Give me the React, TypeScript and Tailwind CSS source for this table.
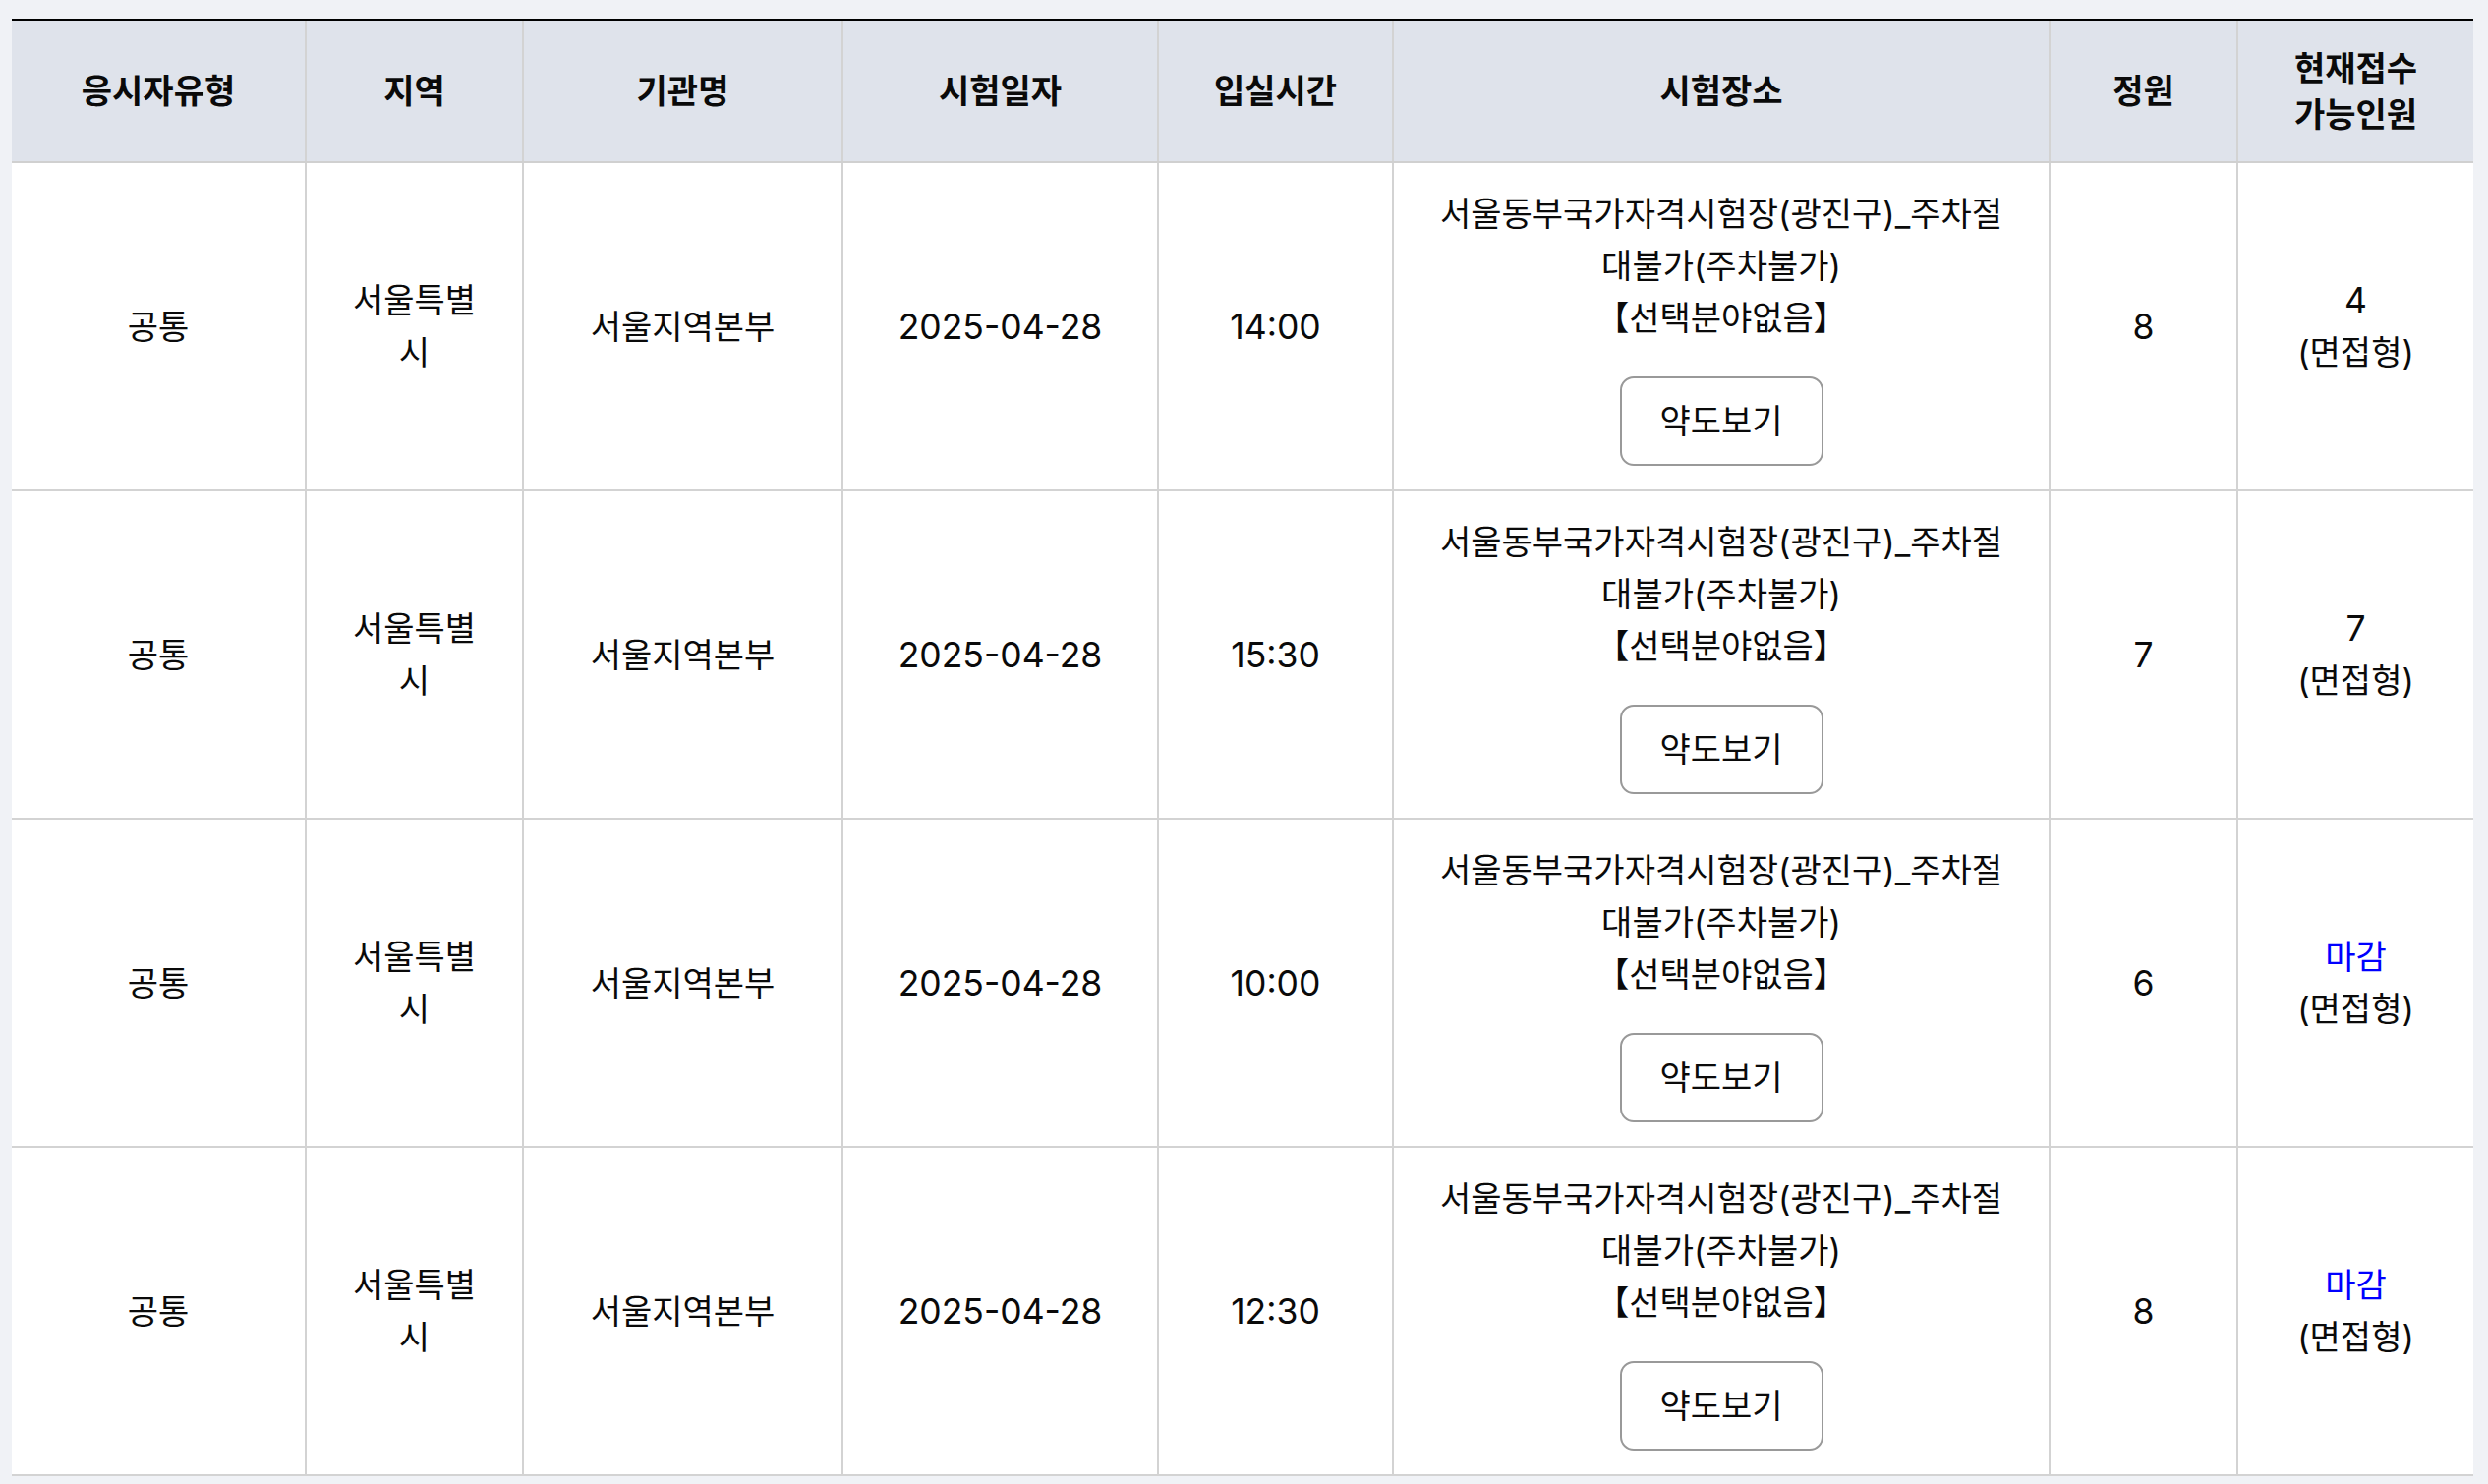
const COLS = "grid grid-cols-[298px_221px_325px_321px_239px_668px_191px_241px]";

const HEAD = ["응시자유형", "지역", "기관명", "시험일자", "입실시간", "시험장소", "정원"];

const ROWS = [
  { time: "14:00", cap: "8", left: "4" },
  { time: "15:30", cap: "7", left: "7" },
  { time: "10:00", cap: "6", left: "마감" },
  { time: "12:30", cap: "8", left: "마감" },
];

function Cell({ first, children }: { first?: boolean; children: React.ReactNode }) {
  return (
    <div
      className={`flex flex-col items-center justify-center text-center ${
        first ? "" : "border-l-2 border-[#d3d3d3]"
      }`}
    >
      {children}
    </div>
  );
}

export default function App() {
  return (
    <div className="min-h-screen bg-[#f0f2f6] pb-[6px] pl-[12px] pr-[15px] pt-[19px] font-['Inter','Noto_Sans_CJK_KR',sans-serif] text-[34px] text-[#0a0a0a]">
      <div className="w-[2504px] border-t-2 border-black">
        <div className={`${COLS} h-[145px] border-b-2 border-[#d0d0d0] bg-[#dfe3eb] font-bold leading-[47px]`}>
          {HEAD.map((h, i) => (
            <Cell key={h} first={i === 0}>
              {h}
            </Cell>
          ))}
          <Cell>
            <span>현재접수</span>
            <span>가능인원</span>
          </Cell>
        </div>

        {ROWS.map((r, i) => (
          <div key={i} className={`${COLS} h-[334px] border-b-2 border-[#d3d3d3] bg-white leading-[53px]`}>
            <Cell first>공통</Cell>
            <Cell>
              <span>서울특별</span>
              <span>시</span>
            </Cell>
            <Cell>서울지역본부</Cell>
            <Cell>
              <span className="text-[35.5px]">2025-04-28</span>
            </Cell>
            <Cell>
              <span className="text-[35.5px]">{r.time}</span>
            </Cell>
            <Cell>
              <span className="whitespace-nowrap">서울동부국가자격시험장(광진구)_주차절</span>
              <span className="whitespace-nowrap">대불가(주차불가)</span>
              <span className="whitespace-nowrap">【선택분야없음】</span>
              <button
                type="button"
                className="mt-[33px] h-[91px] w-[207px] rounded-[14px] border-2 border-[#999] bg-white text-[34px] text-[#0a0a0a]"
              >
                약도보기
              </button>
            </Cell>
            <Cell>
              <span className="text-[35.5px]">{r.cap}</span>
            </Cell>
            <Cell>
              {r.left === "마감" ? (
                <span className="text-[#0000ff]">마감</span>
              ) : (
                <span className="text-[35.5px]">{r.left}</span>
              )}
              <span>(면접형)</span>
            </Cell>
          </div>
        ))}
      </div>
    </div>
  );
}
